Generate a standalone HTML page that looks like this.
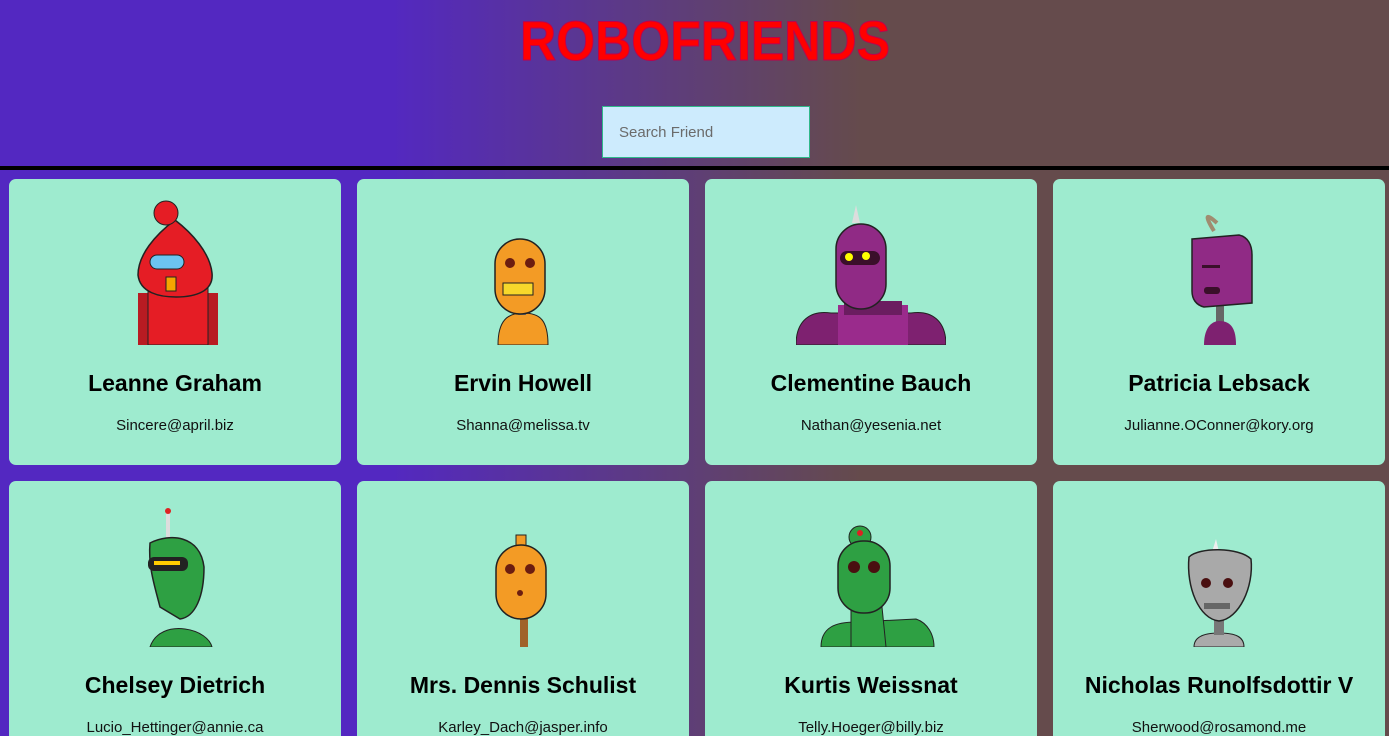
<!DOCTYPE html>
<html><head><meta charset="utf-8"><style>
*{margin:0;padding:0;box-sizing:border-box}
html,body{width:1389px;height:736px;overflow:hidden}
body{background:linear-gradient(to right,#5328c1 0%,#5328c1 28%,#654b4c 62%,#654b4c 100%);font-family:"Liberation Sans",sans-serif;position:relative}
.title{position:absolute;left:518px;top:12px}
.search{position:absolute;left:602px;top:106px;width:208px;height:52px;background:#cdebfd;border:1px solid #2fb88a;font-size:15px;color:#6b6b6b;padding:17px 0 0 16px}
.line{position:absolute;left:0;top:166px;width:1389px;height:4px;background:#000}
.card{position:absolute;width:332px;height:286px;background:#9eebcf;border-radius:7px;text-align:center}
.card svg{position:absolute;left:91px;top:16px}
.card h2{position:absolute;top:191px;width:100%;font-size:23px;font-weight:bold;color:#000}
.card p{position:absolute;top:238px;width:100%;font-size:15px;color:#111}
</style></head><body>
<svg class="title" width="374" height="54" viewBox="0 0 374 54">
<text x="2" y="48" textLength="370" lengthAdjust="spacingAndGlyphs" font-family="Liberation Sans" font-weight="bold" font-size="56" fill="#ff0000" stroke="#c0004a" stroke-width="1">ROBOFRIENDS</text>
</svg>
<div class="search">Search Friend</div>
<div class="line"></div>

<div class="card" style="left:9px;top:179px">
<svg width="150" height="150" viewBox="0 0 150 150"><rect x="38" y="98" width="80" height="52" fill="#b81b22"/><rect x="48" y="92" width="60" height="58" fill="#e51d25" stroke="#222"/><path d="M75 25 C55 40 38 60 38 80 C40 98 60 102 76 102 C96 102 114 96 112 78 C110 58 92 38 75 25Z" fill="#e51d25" stroke="#222" stroke-width="1.5"/><ellipse cx="66" cy="8" rx="12" ry="12" transform="translate(0 10)" fill="#e51d25" stroke="#222"/><rect x="50" y="60" width="34" height="14" rx="7" fill="#6cc4f0" stroke="#222"/><rect x="66" y="82" width="10" height="14" fill="#f5a500" stroke="#222"/></svg>
<h2>Leanne Graham</h2><p>Sincere@april.biz</p></div>

<div class="card" style="left:357px;top:179px">
<svg width="150" height="150" viewBox="0 0 150 150"><path d="M50 150 C50 125 60 118 75 118 C92 118 100 125 100 150Z" fill="#f39b25" stroke="#222"/><rect x="70" y="100" width="8" height="20" fill="#777"/><rect x="47" y="44" width="50" height="75" rx="25" fill="#f39b25" stroke="#222" stroke-width="1.5"/><circle cx="62" cy="68" r="5" fill="#6b1d10"/><circle cx="82" cy="68" r="5" fill="#6b1d10"/><rect x="55" y="88" width="30" height="12" fill="#f7d82b" stroke="#222"/></svg>
<h2>Ervin Howell</h2><p>Shanna@melissa.tv</p></div>

<div class="card" style="left:705px;top:179px">
<svg width="150" height="150" viewBox="0 0 150 150"><path d="M0 150 C0 125 15 115 35 118 L115 118 C135 115 150 125 150 150Z" fill="#7e2170" stroke="#222"/><rect x="42" y="110" width="70" height="40" fill="#9a2b8c"/><rect x="48" y="106" width="58" height="14" fill="#6b1d60"/><path d="M60 10 L64 28 L56 28Z" fill="#ddd"/><rect x="40" y="29" width="50" height="85" rx="25" fill="#902a85" stroke="#222" stroke-width="1.5"/><rect x="44" y="56" width="40" height="14" rx="7" fill="#3a0f2a"/><circle cx="53" cy="62" r="4" fill="#ff0"/><circle cx="70" cy="61" r="4" fill="#ff0"/></svg>
<h2>Clementine Bauch</h2><p>Nathan@yesenia.net</p></div>

<div class="card" style="left:1053px;top:179px">
<svg width="150" height="150" viewBox="0 0 150 150"><rect x="72" y="100" width="8" height="50" fill="#666"/><path d="M60 150 C60 130 70 126 75 126 C88 126 92 135 92 150Z" fill="#7e2170"/><path d="M70 36 C60 20 62 18 73 28" stroke="#a08c70" stroke-width="4" fill="none"/><path d="M48 44 L95 40 C104 42 108 50 108 60 L108 108 L60 112 C52 110 48 104 48 96Z" fill="#902a85" stroke="#222" stroke-width="1.5"/><rect x="58" y="70" width="18" height="3" fill="#3a0f2a"/><rect x="60" y="92" width="16" height="7" rx="3" fill="#3a0f2a"/></svg>
<h2>Patricia Lebsack</h2><p>Julianne.OConner@kory.org</p></div>

<div class="card" style="left:9px;top:481px">
<svg width="150" height="150" viewBox="0 0 150 150"><path d="M50 150 C55 135 70 130 85 132 C100 134 110 142 112 150Z" fill="#2ea043" stroke="#222"/><rect x="66" y="14" width="4" height="30" fill="#ddd"/><circle cx="68" cy="14" r="3" fill="#d22"/><path d="M50 46 C70 36 100 38 104 70 C104 100 95 120 80 122 L60 110 C55 90 48 70 50 46Z" fill="#2ea043" stroke="#222" stroke-width="1.5"/><rect x="48" y="60" width="40" height="14" rx="6" fill="#222"/><rect x="54" y="64" width="26" height="4" fill="#fc0"/></svg>
<h2>Chelsey Dietrich</h2><p>Lucio_Hettinger@annie.ca</p></div>

<div class="card" style="left:357px;top:481px">
<svg width="150" height="150" viewBox="0 0 150 150"><rect x="72" y="110" width="8" height="40" fill="#a0622a"/><rect x="68" y="38" width="10" height="12" fill="#f39b25" stroke="#222"/><rect x="48" y="48" width="50" height="74" rx="25" fill="#f39b25" stroke="#222" stroke-width="1.5"/><circle cx="62" cy="72" r="5" fill="#6b1d10"/><circle cx="82" cy="72" r="5" fill="#6b1d10"/><circle cx="72" cy="96" r="3" fill="#6b1d10"/></svg>
<h2>Mrs. Dennis Schulist</h2><p>Karley_Dach@jasper.info</p></div>

<div class="card" style="left:705px;top:481px">
<svg width="150" height="150" viewBox="0 0 150 150"><path d="M25 150 C25 130 40 125 60 125 L120 122 C132 126 138 138 138 150Z" fill="#2ea043" stroke="#222"/><path d="M55 150 L55 110 L85 100 L90 150Z" fill="#2ea043" stroke="#222"/><circle cx="64" cy="40" r="11" fill="#2ea043" stroke="#222"/><circle cx="64" cy="36" r="3" fill="#d22"/><rect x="42" y="44" width="52" height="72" rx="25" fill="#2ea043" stroke="#222" stroke-width="1.5"/><circle cx="58" cy="70" r="6" fill="#4a0f10"/><circle cx="78" cy="70" r="6" fill="#4a0f10"/></svg>
<h2>Kurtis Weissnat</h2><p>Telly.Hoeger@billy.biz</p></div>

<div class="card" style="left:1053px;top:481px">
<svg width="150" height="150" viewBox="0 0 150 150"><path d="M50 150 C50 140 60 136 75 136 C92 136 100 140 100 150Z" fill="#aaa" stroke="#222"/><rect x="70" y="110" width="10" height="28" fill="#777"/><path d="M72 42 L75 55 L68 55Z" fill="#eee"/><path d="M45 60 C55 50 95 50 107 62 C110 90 95 122 75 124 C55 122 42 90 45 60Z" fill="#a9a9a9" stroke="#222" stroke-width="1.5"/><circle cx="62" cy="86" r="5" fill="#4a0f10"/><circle cx="84" cy="86" r="5" fill="#4a0f10"/><rect x="60" y="106" width="26" height="6" fill="#666"/></svg>
<h2>Nicholas Runolfsdottir V</h2><p>Sherwood@rosamond.me</p></div>
</body></html>
